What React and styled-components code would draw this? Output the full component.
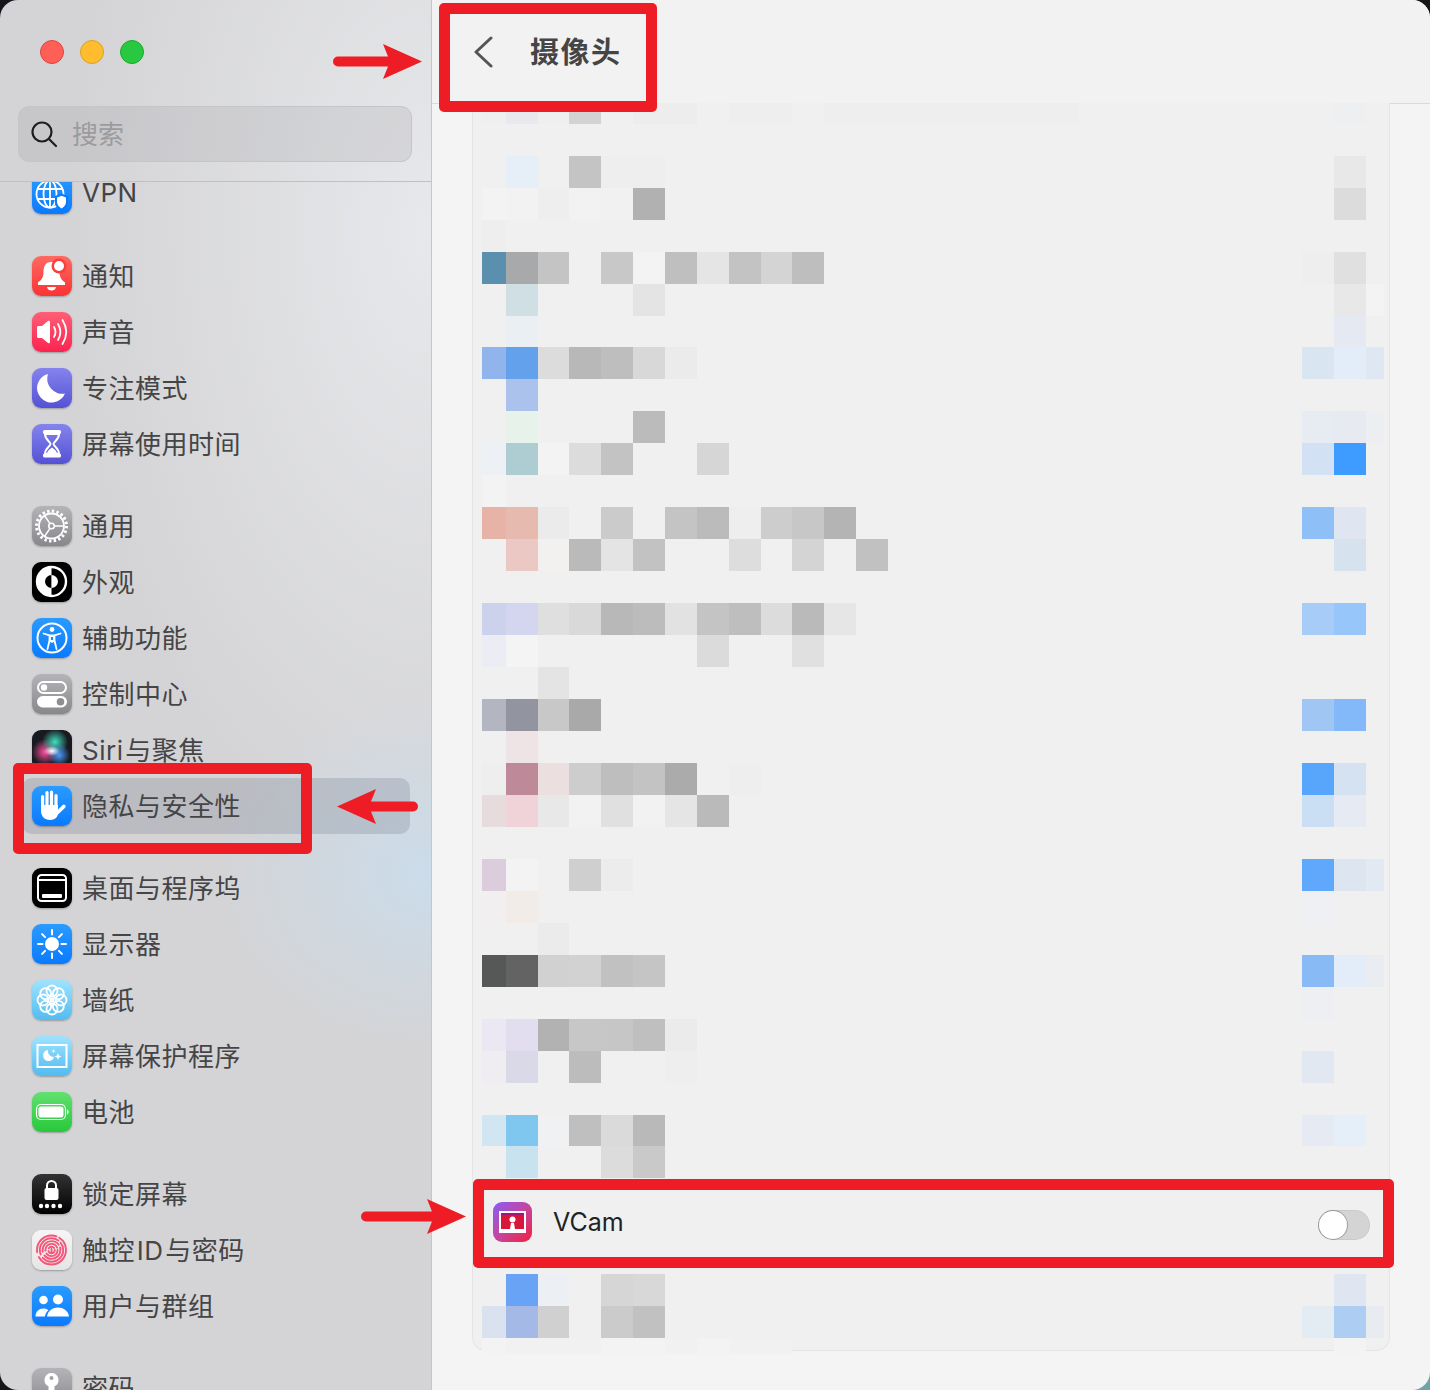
import React from 'react';
import styled, { createGlobalStyle } from 'styled-components';

const RED = '#ee1c25';
const FONT = `Inter, "Noto Sans CJK SC", "Noto Sans", sans-serif`;

const GlobalStyle = createGlobalStyle`
  html, body {
    margin: 0;
    padding: 0;
    overflow: hidden;
    background: radial-gradient(circle 40px at 100% 100%, #6fa3a8 60%, #16161a 100%);
    background-color: #16161a;
  }
`;

const Window = styled.div`
  position: relative;
  display: grid;
  grid-template-columns: 432px 1fr;
  width: 1430px;
  height: 1390px;
  border-radius: 18px;
  overflow: hidden;
  font-family: ${FONT};
`;

/* ---------- sidebar ---------- */

const Sidebar = styled.aside`
  display: flex;
  flex-direction: column;
  height: 1390px;
  overflow: hidden;
  border-right: 1px solid #c6c6c8;
  box-sizing: border-box;
  background:
    radial-gradient(ellipse 210px 170px at 100% 875px, #cbdcea 0%, rgba(203, 220, 234, 0) 100%),
    radial-gradient(ellipse 360px 640px at 100% 230px, #e7e8eb 0%, rgba(231, 232, 235, 0) 100%),
    #d4d4d6;
`;

const SidebarTop = styled.div`
  flex: none;
  padding: 40px 19px 19px 18px;
  border-bottom: 1px solid #bfc0c2;
`;

const Lights = styled.div`
  display: flex;
  gap: 16px;
  padding-left: 22px;
`;

const Light = styled.span`
  width: 24px;
  height: 24px;
  box-sizing: border-box;
  border-radius: 50%;
  background: ${(p) => p.$fill};
  border: 1px solid ${(p) => p.$edge};
`;

const SearchBox = styled.div`
  display: flex;
  align-items: center;
  gap: 14px;
  height: 56px;
  margin-top: 42px;
  padding-left: 11px;
  box-sizing: border-box;
  border: 1px solid #c4c5c8;
  border-radius: 11px;
  background: rgba(120, 120, 125, 0.14);
  color: #9b9b9d;
  font-size: 26px;
`;

const SearchHint = styled.span`
  padding-bottom: 3px;
`;

const NavScroll = styled.nav`
  flex: 1;
  min-height: 0;
  overflow: hidden;
`;

const NavInner = styled.div`
  margin-top: -16px;
`;

const NavGroup = styled.div`
  margin-bottom: 26px;
`;

const NavRow = styled.div`
  display: flex;
  align-items: center;
  gap: 10px;
  height: 56px;
  margin: 0 21px 0 22px;
  padding-left: 10px;
  border-radius: 10px;
  background: ${(p) => (p.$active ? 'rgba(85, 95, 115, 0.2)' : 'transparent')};
  color: #454546;
  font-size: 26px;
  letter-spacing: 0.5px;
  word-spacing: -6px;
  white-space: nowrap;
`;

const NavLabel = styled.span`
  padding-bottom: 4px;
`;

const AppIcon = styled.span`
  flex: none;
  display: block;
  width: 40px;
  height: 40px;
  border-radius: 9px;
  overflow: hidden;
  background: ${(p) => p.$bg};
  box-shadow: 0 1px 2px rgba(0, 0, 0, 0.28);

  svg {
    display: block;
    width: 40px;
    height: 40px;
  }
`;

const BLUE = 'linear-gradient(#2a9bff, #0a7aff)';
const INDIGO = 'linear-gradient(#8583ee, #5452d4)';
const GRAY = 'linear-gradient(#b4b4b8, #88888c)';
const SKY = 'linear-gradient(#9fe3ff, #52bbf0)';

const Glyph = ({ children }) => (
  <svg viewBox="0 0 40 40" fill="none" stroke="none">
    {children}
  </svg>
);

const icons = {
  vpn: (
    <Glyph>
      <g stroke="#fff" strokeWidth="1.8">
        <circle cx="18" cy="20" r="13.5" />
        <ellipse cx="18" cy="20" rx="6.5" ry="13.5" />
        <path d="M18 6.5v27M5 15h26M5 25h26" />
      </g>
      <path d="M23 22l6.5-2.5L36 22v6c0 4-3 7-6.5 8.5C26 35 23 32 23 28z" fill="#0a7aff" />
      <path d="M25 23.5l4.5-1.7 4.5 1.7V28c0 3-2 5-4.5 6.4C27 33 25 31 25 28z" fill="#fff" />
    </Glyph>
  ),
  bell: (
    <Glyph>
      <path d="M19 6c-5.5 0-7.5 4.500-7.500 10 0 5-2 8-5.500 10.500V29h27v-2.500c-3.500-2.500-5.500-5.500-5.500-10.500C27.500 10.500 24.500 6 19 6z" fill="#fff" />
      <path d="M15 31h9c-.5 2.500-2.200 3.500-4.500 3.500S15.500 33.500 15 31z" fill="#fff" />
      <circle cx="27" cy="10" r="7.500" fill="#fb3e3a" />
      <circle cx="27" cy="10" r="5" fill="#fff" />
    </Glyph>
  ),
  sound: (
    <Glyph>
      <path d="M5 15.500c0-.8.500-1.500 1.500-1.500H10l6-5c.8-.6 2-.2 2 1v20c0 1.200-1.200 1.600-2 1l-6-5H6.500C5.500 26 5 25.300 5 24.500z" fill="#fff" />
      <g stroke="#fff" strokeWidth="1.800" strokeLinecap="round">
        <path d="M22 15c1.800 3 1.800 7 0 10" />
        <path d="M26 12c3 5 3 11 0 16" />
        <path d="M30.500 8c4.700 7.500 4.700 16.500 0 24" />
      </g>
    </Glyph>
  ),
  moon: (
    <Glyph>
      <path d="M16 6A14.500 14.500 0 1 0 33 25.500 15 15 0 0 1 16 6z" fill="#fff" />
    </Glyph>
  ),
  hourglass: (
    <Glyph>
      <rect x="11" y="6" width="18" height="4" rx="1.500" fill="#fff" />
      <rect x="11" y="29.500" width="18" height="4" rx="1.500" fill="#fff" />
      <path d="M13 10c0 6 5.500 7.500 5.500 10S13 24 13 30h14c0-6-5.500-7.500-5.500-10S27 16 27 10z" stroke="#fff" strokeWidth="2" />
      <path d="M15 29c.8-3 3.500-4 5-5.500 1.500 1.500 4.200 2.500 5 5.500z" fill="#fff" />
    </Glyph>
  ),
  gear: (
    <Glyph>
      <circle cx="19.500" cy="20" r="15" stroke="#fff" strokeWidth="3" strokeDasharray="2.400 2.300" />
      <circle cx="19.500" cy="20" r="12.500" stroke="#fff" strokeWidth="1.800" />
      <circle cx="19.500" cy="20" r="2.800" stroke="#fff" strokeWidth="1.500" />
      <path d="M22.300 20H32M18 17.700L12.500 9.500M18 22.300L12.500 30.500" stroke="#fff" strokeWidth="1.500" />
    </Glyph>
  ),
  appearance: (
    <Glyph>
      <circle cx="19.500" cy="19.500" r="14.500" stroke="#fff" strokeWidth="2.400" />
      <path d="M19.500 5a14.500 14.500 0 0 0 0 29z" fill="#fff" />
      <path d="M19.500 13a6.500 6.500 0 0 0 0 13z" fill="#000" />
      <path d="M19.500 13a6.500 6.500 0 0 1 0 13z" fill="#fff" />
    </Glyph>
  ),
  access: (
    <Glyph>
      <circle cx="20" cy="20" r="14.500" stroke="#fff" strokeWidth="2" />
      <circle cx="20" cy="11.500" r="2.400" fill="#fff" />
      <path d="M11.500 15.500l6 1.800v5.200L15.500 31M28.500 15.500l-6 1.800v5.200l2 8.500M17.500 17.300h5M17.500 22.500L20 24l2.500-1.500M18 18h4v5h-4z" stroke="#fff" strokeWidth="1.800" strokeLinecap="round" strokeLinejoin="round" />
    </Glyph>
  ),
  control: (
    <Glyph>
      <rect x="6" y="8" width="28" height="11" rx="5.500" stroke="#fff" strokeWidth="2" />
      <circle cx="12" cy="13.500" r="3.200" fill="#fff" />
      <rect x="5" y="22" width="30" height="11.500" rx="5.700" fill="#fff" />
      <circle cx="28.500" cy="27.700" r="3.800" fill="#8e8e92" />
    </Glyph>
  ),
  siri: (
    <Glyph>
      <defs>
        <radialGradient id="siriPink">
          <stop offset="0" stopColor="#ff4fa0" />
          <stop offset="1" stopColor="#ff4fa0" stopOpacity="0" />
        </radialGradient>
        <radialGradient id="siriTeal">
          <stop offset="0" stopColor="#3fe0c0" />
          <stop offset="1" stopColor="#3fe0c0" stopOpacity="0" />
        </radialGradient>
        <radialGradient id="siriBlue">
          <stop offset="0" stopColor="#4a9bff" />
          <stop offset="1" stopColor="#4a9bff" stopOpacity="0" />
        </radialGradient>
        <radialGradient id="siriCore">
          <stop offset="0" stopColor="#fff" />
          <stop offset="1" stopColor="#fff" stopOpacity="0" />
        </radialGradient>
      </defs>
      <circle cx="13" cy="22" r="13" fill="url(#siriPink)" />
      <circle cx="23" cy="12" r="13" fill="url(#siriTeal)" />
      <circle cx="27" cy="25" r="11" fill="url(#siriBlue)" />
      <ellipse cx="20" cy="21" rx="8" ry="5" fill="url(#siriCore)" />
    </Glyph>
  ),
  hand: (
    <Glyph>
      <path d="M9 19H26v8c0 4-3 7-8 7-5.500 0-9-4-9-9z" fill="#fff" />
      <g stroke="#fff" strokeWidth="3.200" strokeLinecap="round">
        <path d="M10.600 22V10.500M15 20V6.500M19.500 20V6M24 21V9.500" />
        <path d="M25 27l6.800-6.500" strokeWidth="3.800" />
      </g>
    </Glyph>
  ),
  dock: (
    <Glyph>
      <rect x="6" y="7" width="28" height="26" rx="3.500" stroke="#fff" strokeWidth="2" />
      <path d="M6 12h28" stroke="#fff" strokeWidth="2" />
      <rect x="10" y="26" width="20" height="4" rx="1" fill="#fff" />
    </Glyph>
  ),
  sun: (
    <Glyph>
      <circle cx="20" cy="20" r="7" fill="#fff" />
      <path d="M20 6v4.500M20 29.500V34M6 20h4.500M29.500 20H34M10.100 10.100l3 3M26.900 26.900l3 3M10.100 29.900l3-3M26.900 13.100l3-3" stroke="#fff" strokeWidth="2" strokeLinecap="round" />
    </Glyph>
  ),
  flower: (
    <Glyph>
      <g stroke="#fff" strokeWidth="1.800">
        {[0, 45, 90, 135, 180, 225, 270, 315].map((a) => (
          <circle key={a} cx="20" cy="11" r="5.500" transform={`rotate(${a} 20 20)`} />
        ))}
      </g>
      <circle cx="20" cy="20" r="2.500" fill="#fff" />
    </Glyph>
  ),
  saver: (
    <Glyph>
      <rect x="5.500" y="9" width="29" height="22" stroke="#fff" strokeWidth="2" />
      <path d="M16 14a5.500 5.500 0 1 0 6 7 6 6 0 0 1-6-7z" fill="#fff" />
      <path d="M26 17l1 2.500 2.500 1-2.500 1-1 2.500-1-2.500-2.500-1 2.500-1zM21.500 13l.6 1.500 1.500.6-1.500.6-.6 1.500-.6-1.500-1.500-.6 1.500-.6z" fill="#fff" />
    </Glyph>
  ),
  battery: (
    <Glyph>
      <rect x="4.500" y="12.500" width="29" height="15" rx="4.500" stroke="#fff" strokeWidth="1.200" />
      <rect x="6.500" y="14.500" width="25" height="11" rx="2.800" fill="#fff" />
      <path d="M35 17.500c1.200.4 1.500 1.300 1.500 2.500s-.3 2.100-1.500 2.500z" fill="#fff" />
    </Glyph>
  ),
  lock: (
    <Glyph>
      <rect x="12.500" y="14" width="14" height="12" rx="2" fill="#fff" />
      <path d="M15 15v-3.500a4.500 4.500 0 0 1 9 0V15" stroke="#fff" strokeWidth="2" />
      {[9, 15, 21.500, 28].map((x) => (
        <circle key={x} cx={x} cy="32" r="2.200" fill="#fff" />
      ))}
    </Glyph>
  ),
  touch: (
    <Glyph>
      <g stroke="#f4567a" strokeWidth="1.900" strokeLinecap="round">
        <circle cx="19.500" cy="20" r="14.500" strokeDasharray="38 5 30 3" />
        <circle cx="19.500" cy="20" r="11.700" strokeDasharray="28 4 30 3" />
        <circle cx="19.500" cy="20" r="8.900" strokeDasharray="22 4 24 3" />
        <circle cx="19.500" cy="20" r="6.100" strokeDasharray="15 3 17 3" />
        <circle cx="19.500" cy="20" r="3.300" strokeDasharray="9 3 6 3" />
        <path d="M19.500 19v3" />
      </g>
    </Glyph>
  ),
  users: (
    <Glyph>
      <circle cx="11.500" cy="14" r="4.300" fill="#fff" />
      <circle cx="26" cy="13.500" r="5" fill="#fff" />
      <path d="M3.500 30.500c0-5 3.500-8 8-8 2 0 3.500.5 5 1.700-2 1.500-3.300 3.800-3.500 6.300z" fill="#fff" />
      <path d="M15 30.500c.5-5 5-9 11-9s10.500 4 11 9z" fill="#fff" />
    </Glyph>
  ),
  key: (
    <Glyph>
      <path d="M19.500 5a7 7 0 0 1 3 13.300V32l-3 3-3-3V18.300A7 7 0 0 1 19.500 5z" fill="#fff" />
      <circle cx="19.500" cy="10" r="2" fill="#a0a0a4" />
    </Glyph>
  ),
};

const navGroups = [
  [{ label: 'VPN', icon: 'vpn', bg: BLUE }],
  [
    { label: '通知', icon: 'bell', bg: 'linear-gradient(#ff6a60, #fb3235)' },
    { label: '声音', icon: 'sound', bg: 'linear-gradient(#ff5f76, #fb2350)' },
    { label: '专注模式', icon: 'moon', bg: INDIGO },
    { label: '屏幕使用时间', icon: 'hourglass', bg: INDIGO },
  ],
  [
    { label: '通用', icon: 'gear', bg: GRAY },
    { label: '外观', icon: 'appearance', bg: '#000' },
    { label: '辅助功能', icon: 'access', bg: BLUE },
    { label: '控制中心', icon: 'control', bg: GRAY },
    { label: 'Siri 与聚焦', icon: 'siri', bg: '#191a20' },
    { label: '隐私与安全性', icon: 'hand', bg: BLUE, active: true },
  ],
  [
    { label: '桌面与程序坞', icon: 'dock', bg: '#000' },
    { label: '显示器', icon: 'sun', bg: BLUE },
    { label: '墙纸', icon: 'flower', bg: SKY },
    { label: '屏幕保护程序', icon: 'saver', bg: SKY },
    { label: '电池', icon: 'battery', bg: 'linear-gradient(#62e070, #28c83c)' },
  ],
  [
    { label: '锁定屏幕', icon: 'lock', bg: 'linear-gradient(#333, #000)' },
    { label: '触控 ID 与密码', icon: 'touch', bg: 'linear-gradient(#f6f4f4, #e6e5e6)' },
    { label: '用户与群组', icon: 'users', bg: BLUE },
  ],
  [{ label: '密码', icon: 'key', bg: GRAY }],
];

/* ---------- main pane ---------- */

const Main = styled.main`
  display: flex;
  flex-direction: column;
  min-width: 0;
  background: #f4f4f4;
`;

const Header = styled.header`
  flex: none;
  display: flex;
  align-items: center;
  height: 104px;
  padding: 0 0 0 41px;
  box-sizing: border-box;
  border-bottom: 1px solid #dadadb;
  background: #f2f2f3;
`;

const BackIcon = styled.svg`
  display: block;
  width: 22px;
  height: 32px;
  margin-right: 35px;
`;

const Title = styled.h1`
  margin: 0;
  padding-bottom: 4px;
  color: #454545;
  font-size: 29px;
  font-weight: 700;
  letter-spacing: 1.500px;
`;

const Body = styled.div`
  flex: 1;
  padding: 0 40px;
`;

const Card = styled.section`
  position: relative;
  margin-top: -1px;
  box-sizing: border-box;
  border: 1px solid #e4e4e4;
  border-top: 0;
  border-radius: 0 0 14px 14px;
  background: #f0f0f0;
`;

const Mosaic = styled.svg`
  display: block;
  overflow: visible;
`;

const AppRow = styled.div`
  display: flex;
  align-items: flex-start;
  height: 96px;
  padding: 24px 19px 0 20px;
  box-sizing: border-box;
`;

const AppName = styled.span`
  flex: 1;
  margin-left: 21px;
  color: #222;
  font-size: 25px;
  line-height: 40px;
`;

const VCamTile = styled.span`
  flex: none;
  display: block;
  width: 39px;
  height: 40px;
  border-radius: 9px;
  overflow: hidden;
  background: linear-gradient(135deg, #8a5cf6 0%, #c545a0 50%, #f3203c 100%);

  svg {
    display: block;
    width: 39px;
    height: 40px;
  }
`;

const Switch = styled.span`
  flex: none;
  display: flex;
  align-items: center;
  width: 52px;
  height: 30px;
  margin-top: 8px;
  padding-left: 1px;
  box-sizing: border-box;
  border-radius: 15px;
  background: #d4d4d4;
  box-shadow: inset 0 0 0 1px rgba(0, 0, 0, 0.05);
`;

const Knob = styled.span`
  width: 28px;
  height: 28px;
  border-radius: 50%;
  background: #fff;
  box-shadow: 0 0 0 1px rgba(0, 0, 0, 0.25);
`;

/* ---------- red annotations over the screenshot ---------- */

const Callout = styled.div`
  position: absolute;
  left: ${(p) => p.$x}px;
  top: ${(p) => p.$y}px;
  width: ${(p) => p.$w}px;
  height: ${(p) => p.$h}px;
  box-sizing: border-box;
  border: 11px solid ${RED};
  border-radius: 5px;
  pointer-events: none;
`;

const ArrowSvg = styled.svg`
  position: absolute;
  left: ${(p) => p.$x}px;
  top: ${(p) => p.$y}px;
  transform: ${(p) => (p.$flip ? 'scaleX(-1)' : 'none')};
  pointer-events: none;
`;

const Arrow = ({ x, y, length, flip }) => {
  const neck = length - 39;
  return (
    <ArrowSvg $x={x} $y={y} $flip={flip} width={length} height="35" viewBox={`0 0 ${length} 35`}>
      <path
        d={`M5 12.500H${neck + 5}L${neck} 0L${length} 17.500L${neck} 35L${neck + 5} 22.500H5A5 5 0 0 1 5 12.500Z`}
        fill={RED}
      />
    </ArrowSvg>
  );
};

/* ---------- blurred list: [row, cells from the left edge, cells from the right edge] ---------- */

const colX = (c) => (c === 0 ? 482 : Math.floor(506.2 + 31.86 * (c - 1)));
const colW = (c) => {
  if (c === 0) return 24;
  if (c === 28) return 18;
  return colX(c + 1) - colX(c);
};

const topRows = [
  [0, 'efefef e9e9ed efefef d3d3d3 - ededee ededee - eeeeee eeeeee - eeeeef eeeeef eeeeef eeeeef eeeeef eeeeef eeeeef eeeeef', '- eeeff1'],
  [2, 'f0f0f0 e6eef8 - c4c4c4 eeeeee eeeeee', '- e8e8e8'],
  [3, 'f3f3f3 f2f2f2 eeeeee f2f2f2 f1f1f1 b1b1b1', '- dcdcdc'],
  [4, 'eeeeee'],
  [5, '5a8fae a8a9ab c4c4c4 - c8c8c8 f3f3f3 bfbfbf e5e5e5 c3c3c3 d4d4d4 bebebe', 'eeeeee e0e0e0'],
  [6, '- cfdfe3 - - - e4e4e4', '- e8e8e8 f3f3f3'],
  [7, '- e9eff3', '- e5e9f1'],
  [8, '92b4ec 63a1ed dcdcdc b8b8b8 bebebe d8d8d8 ebebeb', 'd9e5f0 e3edf9 dfe7f3'],
  [9, '- abc3ec'],
  [10, '- e7f2ea - - - bbbbbb', 'e7ebf2 e7eaf1 edeef2'],
  [11, 'edf0f5 aecdd2 f3f3f3 dcdcdc c3c3c3 - - d6d6d6', 'd2e2f4 3e9bff'],
  [12, 'f3f3f3'],
  [13, 'e7b3a6 e7bab0 ebebeb - cbcbcb - c4c4c4 bbbbbb eeeeee cdcdcd c7c7c7 b4b4b4', '8fbff7 dfe6f2'],
  [14, '- ebc8c3 f3f0f0 bababa e4e4e4 c2c2c2 - - dddddd - d4d4d4 - c1c1c1', '- d6e3ef'],
  [16, 'ccd1ec d4d6f0 dfdfdf d9d9d9 b8b8b8 bcbcbc e2e2e2 c4c4c4 bebebe dcdcdc bababa e6e6e6', 'a7ccf7 97c7fa'],
  [17, 'ecedf4 f4f4f4 - - - - - dbdbdb - - e0e0e0'],
  [18, '- - e4e4e4'],
  [19, 'b3b6c1 9294a0 c8c8c8 a9a9a9', 'a0c7f4 83b9f9'],
  [20, '- efe4e5'],
  [21, 'eeeeee be8a9a ecdfe0 cdcdcd bebebe c3c3c3 ababab - eeeeee', '58a6fb d5e2f2'],
  [22, 'e6dcdd efd3d8 e8e8e8 f2f2f2 e0e0e0 f2f2f2 e5e5e5 bababa', 'cadff3 e6eaf2'],
  [24, 'dccddd f3f3f3 - cfcfcf ececec', '60a8fb dde5f1 e2e9f3'],
  [25, 'f2eff0 f2ece9', 'eef0f4'],
  [26, '- - ebebeb'],
  [27, '565857 636363 d1d1d1 d2d2d2 c1c1c1 c5c5c5', '88baf6 e3edf9 e9edf2'],
  [28, '', 'edeff3'],
  [29, 'ebe8f3 e2ddef b2b2b2 c7c7c7 c6c6c6 bfbfbf ebebeb'],
  [30, 'efecf2 dad9e8 - bcbcbc - - eeeeee', 'e1e8f2'],
  [32, 'd1e5f2 7fc7ef eff1f3 bfbfbf dadada b9b9b9', 'e6ebf3 e5effa'],
  [33, '- c9e2f0 - - dcdcdc c9c9c9'],
];

const bottomRows = [
  [0, '- 69a3f6 eceff3 - d6d6d6 d8d8d8', '- dfe6f1'],
  [1, 'dae2f0 a4b9e6 d0d0d0 - cbcbcb c1c1c1', 'e3ebf3 aecdf3 e8ecf1'],
  [2, 'f3f3f3 f1f1f1 f1f1f1 f1f1f1 f3f3f3 f3f3f3 f1f1f1 f3f3f3 f1f1f1 f1f1f1', '- f3f3f3'],
];

const toCells = (rows, rowY, rowH) =>
  rows.flatMap(([row, left = '', right = '']) => {
    const read = (text, from) =>
      text
        .split(' ')
        .map((hex, i) => ({ hex, c: from + i }))
        .filter((cell) => cell.hex && cell.hex !== '-')
        .map((cell) => ({ ...cell, y: rowY(row), h: rowH(row) }));
    return [...read(left, 0), ...read(right, 26)];
  });

const topY = (r) => Math.round(91.8 + 31.96 * r);
const bottomY = (r) => 1274 + 32 * r;

const topCells = toCells(topRows, topY, (r) => topY(r + 1) - topY(r));
const bottomCells = toCells(bottomRows, bottomY, (r) => (r === 2 ? 16 : 32));

const MosaicBlock = ({ cells, top, height }) => (
  <Mosaic width="917" height={height} viewBox={`473 ${top} 917 ${height}`} shapeRendering="crispEdges">
    {cells.map((cell) => {
      const y = Math.max(cell.y, top);
      return (
        <rect
          key={`${cell.y}-${cell.c}`}
          x={colX(cell.c)}
          y={y}
          width={colW(cell.c)}
          height={cell.y + cell.h - y}
          fill={`#${cell.hex}`}
        />
      );
    })}
  </Mosaic>
);

const App = () => (
  <>
    <GlobalStyle />
    <Window>
      <Sidebar>
        <SidebarTop>
          <Lights>
            <Light $fill="#ff5f57" $edge="#e0443e" />
            <Light $fill="#febc2e" $edge="#dea123" />
            <Light $fill="#28c840" $edge="#1aab29" />
          </Lights>
          <SearchBox>
            <svg width="28" height="28" viewBox="0 0 28 28" fill="none" stroke="#1e1e1e" strokeWidth="2.200" strokeLinecap="round">
              <circle cx="12" cy="12" r="9.500" />
              <path d="M19 19l7 7" />
            </svg>
            <SearchHint>搜索</SearchHint>
          </SearchBox>
        </SidebarTop>
        <NavScroll>
          <NavInner>
            {navGroups.map((group) => (
              <NavGroup key={group[0].label}>
                {group.map((item) => (
                  <NavRow key={item.label} $active={item.active}>
                    <AppIcon $bg={item.bg}>{icons[item.icon]}</AppIcon>
                    <NavLabel>{item.label}</NavLabel>
                  </NavRow>
                ))}
              </NavGroup>
            ))}
          </NavInner>
        </NavScroll>
      </Sidebar>

      <Main>
        <Header>
          <BackIcon viewBox="0 0 22 32" fill="none" stroke="#555" strokeWidth="3" strokeLinecap="round" strokeLinejoin="round">
            <path d="M18 2L3 16l15 14" />
          </BackIcon>
          <Title>摄像头</Title>
        </Header>
        <Body>
          <Card>
            <MosaicBlock cells={topCells} top={103} height={1075} />
            <AppRow>
              <VCamTile>
                <svg viewBox="0 0 39 40">
                  <rect x="6" y="9" width="27" height="22" fill="#fff" />
                  <rect x="8" y="11" width="23" height="16" fill="#d8163c" />
                  <path d="M8 11h23v2H8z" fill="#a8127c" />
                  <circle cx="19.500" cy="17.500" r="3" fill="#fff" />
                  <path d="M17 27l1-6h3l1 6z" fill="#fff" />
                </svg>
              </VCamTile>
              <AppName>VCam</AppName>
              <Switch>
                <Knob />
              </Switch>
            </AppRow>
            <MosaicBlock cells={bottomCells} top={1274} height={76} />
          </Card>
        </Body>
      </Main>

      <Callout $x={439} $y={3} $w={218} $h={109} />
      <Callout $x={13} $y={763} $w={299} $h={91} />
      <Callout $x={473} $y={1179} $w={921} $h={89} />
      <Arrow x={333} y={44} length={89} />
      <Arrow x={337} y={789} length={81} flip />
      <Arrow x={361} y={1199} length={105} />
    </Window>
  </>
);

export default App;
